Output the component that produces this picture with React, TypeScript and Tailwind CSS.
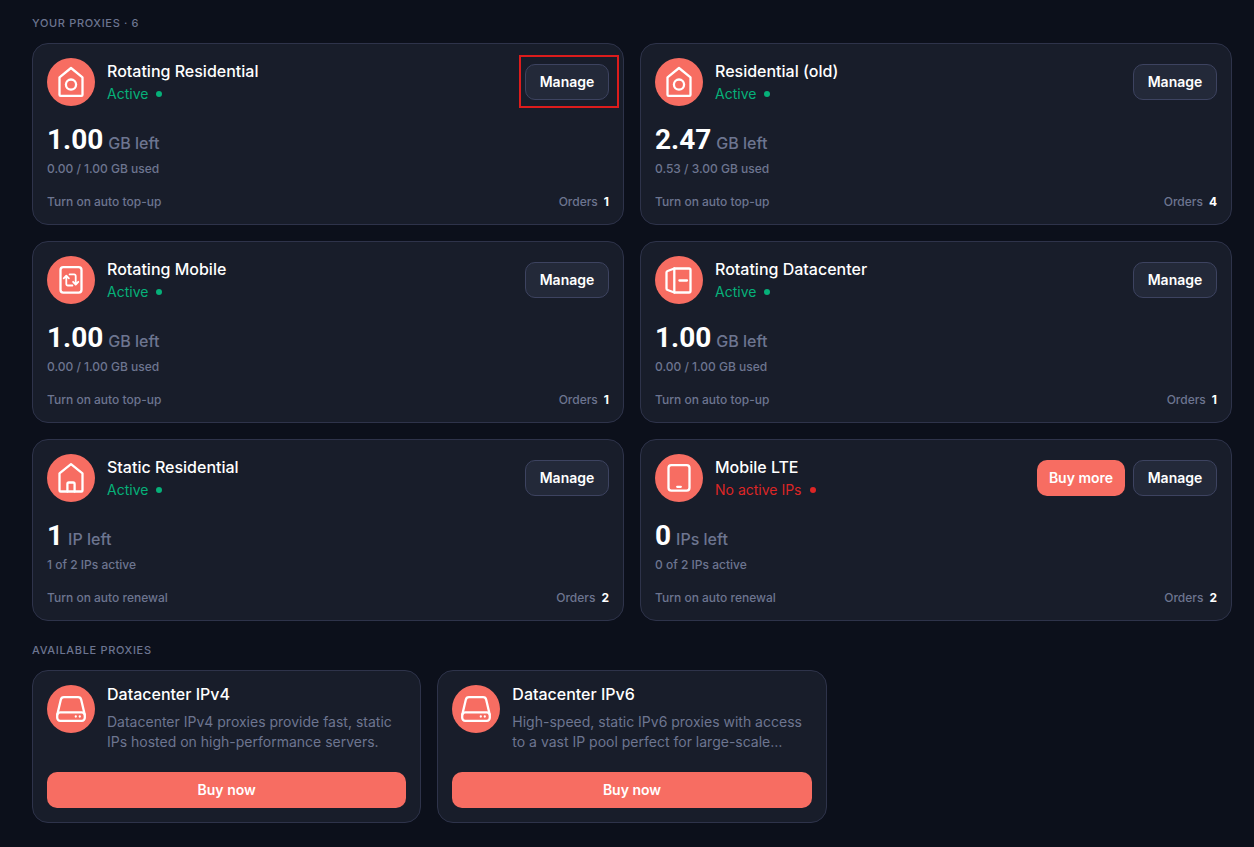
import type { ReactNode } from "react";

type IconName = "eye-house" | "rotate-phone" | "rack" | "house" | "phone" | "drive";

const drawings: Record<IconName, ReactNode> = {
  "eye-house": (
    <>
      <path d="M24 10 35.5 19.4V36.7a1.1 1.1 0 0 1-1.1 1.1H13.6a1.1 1.1 0 0 1-1.1-1.1V19.4Z" />
      <circle cx="24" cy="26.6" r="5.1" />
    </>
  ),
  "rotate-phone": (
    <>
      <rect x="13.5" y="11.2" width="21" height="25.4" rx="2.8" />
      <g strokeWidth="1.8">
        <path d="M19.3 20v8a1.5 1.5 0 0 0 1.5 1.5h4.6M16.7 22.4l2.6-2.8 2.6 2.8" />
        <path d="M22.6 18.4h4.6a1.5 1.5 0 0 1 1.5 1.5v8.2M26.1 25.8l2.6 2.8 2.6-2.8" />
      </g>
    </>
  ),
  rack: (
    <>
      <path d="M19.3 12.5H34a1.5 1.5 0 0 1 1.5 1.5v21a1.5 1.5 0 0 1-1.5 1.5H19.3Z" />
      <path d="M19.3 12.5 12.6 15a1.7 1.7 0 0 0-1.1 1.6v15.8a1.7 1.7 0 0 0 1.1 1.6l6.7 2.5M24.4 24.5h7.6" />
    </>
  ),
  house: (
    <>
      <path d="M24 10.2 35.5 19.4V36.4a1.1 1.1 0 0 1-1.1 1.1H13.6a1.1 1.1 0 0 1-1.1-1.1V19.4Z" />
      <path d="M20.4 37.5V30a1.5 1.5 0 0 1 1.5-1.5h4.2a1.5 1.5 0 0 1 1.5 1.5v7.5" />
    </>
  ),
  phone: (
    <>
      <rect x="13.5" y="11.2" width="21" height="25.4" rx="2.8" />
      <path d="M22.2 32.8h3.6" />
    </>
  ),
  drive: (
    <>
      <path d="M10.3 29.6 13.8 14.7A3.2 3.2 0 0 1 16.9 12.2H31.1a3.2 3.2 0 0 1 3.1 2.5L37.7 29.6" />
      <rect x="10.2" y="27.4" width="27.6" height="8.4" rx="3" />
      <path d="M28.8 31.5h.01M32.8 31.5h.01" />
    </>
  ),
};

function ProductIcon({ name }: { name: IconName }) {
  return (
    <span className="size-12 shrink-0 rounded-full bg-[#f76d62]">
      <svg
        viewBox="0 0 48 48"
        className="size-12"
        fill="none"
        stroke="white"
        strokeWidth="2.3"
        strokeLinecap="round"
        strokeLinejoin="round"
        aria-hidden="true"
      >
        {drawings[name]}
      </svg>
    </span>
  );
}

type Proxy = {
  name: string;
  icon: IconName;
  amount: string;
  unit: string;
  usage: string;
  auto: string;
  orders: number;
  inactive?: boolean;
  highlighted?: boolean;
};

const proxies: Proxy[] = [
  { name: "Rotating Residential", icon: "eye-house", amount: "1.00", unit: "GB left", usage: "0.00 / 1.00 GB used", auto: "Turn on auto top-up", orders: 1, highlighted: true },
  { name: "Residential (old)", icon: "eye-house", amount: "2.47", unit: "GB left", usage: "0.53 / 3.00 GB used", auto: "Turn on auto top-up", orders: 4 },
  { name: "Rotating Mobile", icon: "rotate-phone", amount: "1.00", unit: "GB left", usage: "0.00 / 1.00 GB used", auto: "Turn on auto top-up", orders: 1 },
  { name: "Rotating Datacenter", icon: "rack", amount: "1.00", unit: "GB left", usage: "0.00 / 1.00 GB used", auto: "Turn on auto top-up", orders: 1 },
  { name: "Static Residential", icon: "house", amount: "1", unit: "IP left", usage: "1 of 2 IPs active", auto: "Turn on auto renewal", orders: 2 },
  { name: "Mobile LTE", icon: "phone", amount: "0", unit: "IPs left", usage: "0 of 2 IPs active", auto: "Turn on auto renewal", orders: 2, inactive: true },
];

const offers = [
  { name: "Datacenter IPv4", text: "Datacenter IPv4 proxies provide fast, static IPs hosted on high-performance servers." },
  { name: "Datacenter IPv6", text: "High-speed, static IPv6 proxies with access to a vast IP pool perfect for large-scale…" },
];

function ProxyCard({ proxy }: { proxy: Proxy }) {
  return (
    <article className="rounded-2xl border border-[#2e334a] bg-[#181d2a] p-3.5">
      <div className="flex items-center gap-3">
        <ProductIcon name={proxy.icon} />
        <div className="min-w-0 flex-1">
          <h3 className="text-base leading-[22px] font-medium text-white">{proxy.name}</h3>
          <p className={`mt-0.5 flex items-center gap-2 text-sm ${proxy.inactive ? "text-[#dc2626]" : "text-[#06b079]"}`}>
            {proxy.inactive ? "No active IPs" : "Active"}
            <span className="size-1.5 rounded-full bg-current" />
          </p>
        </div>
        <div className="flex gap-2">
          {proxy.inactive && (
            <button type="button" className="h-9 w-[88px] rounded-[10px] bg-[#f76d62] text-sm font-semibold text-white">
              Buy more
            </button>
          )}
          <div className="relative">
            <button
              type="button"
              className="h-9 w-[84px] rounded-[10px] border border-[#3d4360] bg-[#232939] text-sm font-semibold text-white"
            >
              Manage
            </button>
            {proxy.highlighted && (
              <span className="pointer-events-none absolute -top-[9px] -right-2.5 -bottom-2 -left-1.5 border-2 border-[#dc1c1c]" />
            )}
          </div>
        </div>
      </div>
      <p className="mt-4 flex items-baseline gap-[5px] leading-9">
        <span className="font-['Roboto',sans-serif] text-[28px] font-bold text-white">{proxy.amount}</span>
        <span className="text-base font-medium">{proxy.unit}</span>
      </p>
      <p className="text-xs leading-[22px] font-medium">{proxy.usage}</p>
      <div className="mt-3.5 flex justify-between text-xs font-medium">
        <a href="#auto">{proxy.auto}</a>
        <span className="flex gap-1.5">
          Orders <b className="font-bold text-white">{proxy.orders}</b>
        </span>
      </div>
    </article>
  );
}

function SectionTitle({ children }: { children: ReactNode }) {
  return <h2 className="mb-3 text-[11px] leading-4 font-medium tracking-[0.06em] uppercase">{children}</h2>;
}

export default function App() {
  return (
    <main className="min-h-screen bg-[#0c101b] pt-[15px] pr-[22px] pb-6 pl-8 font-['Inter',sans-serif] text-[#6d7590]">
      <section>
        <SectionTitle>Your proxies · {proxies.length}</SectionTitle>
        <div className="grid gap-4 md:grid-cols-2">
          {proxies.map((proxy) => (
            <ProxyCard key={proxy.name} proxy={proxy} />
          ))}
        </div>
      </section>
      <section className="mt-[21px]">
        <SectionTitle>Available proxies</SectionTitle>
        <div className="grid gap-4 md:grid-cols-3">
          {offers.map((offer) => (
            <article key={offer.name} className="flex flex-col rounded-2xl border border-[#2e334a] bg-[#181d2a] p-3.5">
              <div className="flex flex-1 gap-3">
                <ProductIcon name="drive" />
                <div className="min-w-0">
                  <h3 className="text-base leading-[18px] font-medium text-white">{offer.name}</h3>
                  <p className="mt-[9px] text-sm">{offer.text}</p>
                </div>
              </div>
              <button type="button" className="mt-5 h-9 w-full rounded-[10px] bg-[#f76d62] text-sm font-semibold text-white">
                Buy now
              </button>
            </article>
          ))}
        </div>
      </section>
    </main>
  );
}
